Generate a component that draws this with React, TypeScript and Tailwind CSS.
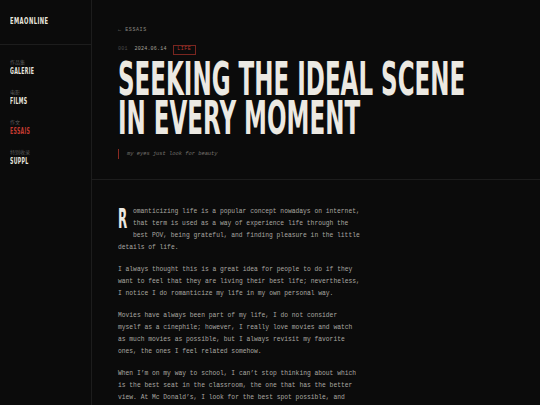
// Essay detail page: sidebar nav + article header + body

const display = "font-['Liberation_Sans_Narrow','DejaVu_Sans_Condensed',sans-serif] font-bold uppercase";
const mono = "font-['Liberation_Mono','DejaVu_Sans_Mono',monospace]";

const navItems = [
  { label: '作品集', title: 'GALERIE', active: false },
  { label: '电影', title: 'FILMS', active: false },
  { label: '作文', title: 'ESSAIS', active: true },
  { label: '特别收录', title: 'SUPPL', active: false },
];

const paragraphs = [
  'I always thought this is a great idea for people to do if they want to feel that they are living their best life; nevertheless, I notice I do romanticize my life in my own personal way.',
  'Movies have always been part of my life, I do not consider myself as a cinephile; however, I really love movies and watch as much movies as possible, but I always revisit my favorite ones, the ones I feel related somehow.',
  'When I’m on my way to school, I can’t stop thinking about which is the best seat in the classroom, the one that has the better view. At Mc Donald’s, I look for the best spot possible, and sometimes imagine the scene as if it were a frame of a film.',
];

function Sidebar() {
  return (
    <aside className="w-[92px] shrink-0 border-r border-[#1d1d1d]">
      <div className="h-[45px] border-b border-[#1d1d1d] pl-[10px] pt-[17px]">
        <span className={`${display} block origin-left scale-x-[0.64] text-[9px] leading-[9px] tracking-[0.7px] text-[#e8e5de]`}>
          EMAONLINE
        </span>
      </div>
      <nav className="pl-[10px] pt-[13px]">
        {navItems.map((item) => (
          <div key={item.title} className="h-[30px]">
            <div className="font-['Noto_Sans_CJK_SC',sans-serif] text-[5px] leading-[8px] text-[#5c5c5c]">
              {item.label}
            </div>
            <div
              className={`${display} mt-[1px] origin-left scale-x-[0.61] text-[8.5px] leading-[9px] tracking-[0.5px] ${
                item.active ? 'text-[#c23a30]' : 'text-[#e8e5de]'
              }`}
            >
              {item.title}
            </div>
          </div>
        ))}
      </nav>
    </aside>
  );
}

export default function App() {
  return (
    <div className="flex min-h-screen bg-[#0b0b0b]">
      <Sidebar />

      <main className="flex-1 min-w-0">
        {/* Article header */}
        <header className="border-b border-[#1d1d1d] pl-[26px] pt-[26px] pb-[20px]">
          <div className={`${mono} text-[5px] leading-[8px] tracking-[0.6px] text-[#8a8780]`}>← ESSAIS</div>

          <div className={`${mono} mt-[11px] flex h-[10px] items-center text-[5px] tracking-[0.2px]`}>
            <span className="text-[#4a4a4a]">001</span>
            <span className="ml-[7px] text-[#a8a59d]">2024.06.14</span>
            <span className="ml-[6px] flex h-[10px] items-center border border-[#7a2620] px-[3.5px] tracking-[0.5px] text-[#b8382e]">
              LIFE
            </span>
          </div>

          <h1 className={`${display} mt-[4.6px] origin-left scale-x-[0.556] whitespace-nowrap text-[46px] leading-[39px] text-[#ece9e2]`}>
            Seeking the ideal scene
            <br />
            in every moment
          </h1>

          <div className="mt-[11.4px] flex h-[10px] items-center border-l-[1.5px] border-[#8a2a22] pl-[8px]">
            <span className={`${mono} text-[5.4px] italic text-[#77746e]`}>my eyes just look for beauty</span>
          </div>
        </header>

        {/* Article body */}
        <article className={`${mono} ml-[26px] w-[242px] pt-[26px] text-[6.3px] leading-[12px] text-[#a9a7a1]`}>
          <p>
            <span className="float-left h-[30px] w-[15px]">
              <span className={`${display} block origin-left scale-x-[0.5] text-[26.5px] leading-[26.5px] text-[#ece9e2]`}>
                R
              </span>
            </span>
            omanticizing life is a popular concept nowadays on internet, that term is used as a way of experience life
            through the best POV, being grateful, and finding pleasure in the little details of life.
          </p>
          {paragraphs.map((text, i) => (
            <p key={i} className="mt-[10px]">
              {text}
            </p>
          ))}
        </article>
      </main>
    </div>
  );
}
